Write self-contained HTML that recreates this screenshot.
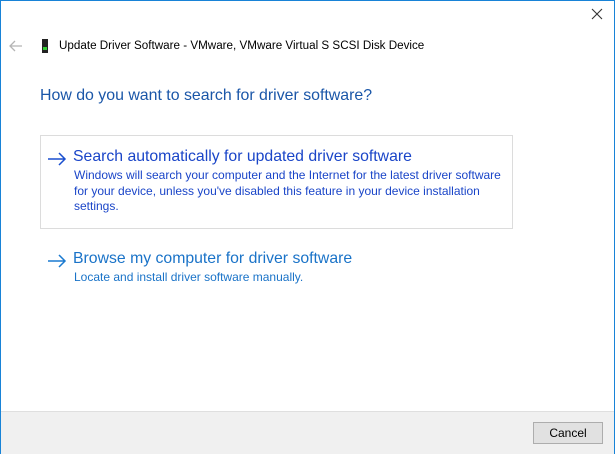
<!DOCTYPE html>
<html><head><style>
body{margin:0;width:615px;height:454px;overflow:hidden;font-family:"Liberation Sans",sans-serif;}
.win{position:absolute;left:0;top:0;width:613px;height:452px;border:1px solid #1883d7;background:#fff;}
.t{position:absolute;white-space:nowrap;}
</style></head><body>
<div class="win">
<svg class="t" style="left:589px;top:6px" width="14" height="14"><path d="M2 2L12 12M12 2L2 12" stroke="#333" stroke-width="1.1"/></svg>
<svg class="t" style="left:8px;top:39px" width="14" height="12"><path d="M1 6H13M6 1L1 6L6 11" stroke="#b5b5b5" stroke-width="1.3" fill="none"/></svg>
<div class="t" style="left:41px;top:38px;width:6px;height:14px;background:#222;"></div>
<div class="t" style="left:42px;top:46px;width:4px;height:3px;background:#3c3;"></div>
<div class="t" style="left:58px;top:38px;font-size:11.65px;color:#000;">Update Driver Software - VMware, VMware Virtual S SCSI Disk Device</div>
<div class="t" style="left:39px;top:86px;font-size:15.9px;color:#1a56a8;">How do you want to search for driver software?</div>
<div class="t" style="left:39px;top:134px;width:471px;height:92px;border:1px solid #dcdcdc;"></div>
<svg class="t" style="left:46px;top:151px" width="20" height="14"><path d="M1 7H18M12 1L18 7L12 13" stroke="#1a4fcf" stroke-width="1.5" fill="none"/></svg>
<div class="t" style="left:72px;top:147px;font-size:15.8px;color:#1a45c8;">Search automatically for updated driver software</div>
<div class="t" style="left:73px;top:167px;font-size:12px;line-height:15.5px;color:#1a45c8;">Windows will search your computer and the Internet for the latest driver software<br>for your device, unless you've disabled this feature in your device installation<br>settings.</div>
<svg class="t" style="left:46px;top:253px" width="20" height="14"><path d="M1 7H18M12 1L18 7L12 13" stroke="#1a7ad0" stroke-width="1.5" fill="none"/></svg>
<div class="t" style="left:72px;top:249px;font-size:15.8px;color:#1a73c8;">Browse my computer for driver software</div>
<div class="t" style="left:73px;top:269px;font-size:12px;color:#1a73c8;">Locate and install driver software manually.</div>
<div class="t" style="left:0;top:410px;width:613px;height:42px;background:#f0f0f0;border-top:1px solid #dfdfdf;"></div>
<div class="t" style="left:532px;top:421px;width:68px;height:20px;border:1px solid #adadad;background:#e1e1e1;font-size:12px;text-align:center;line-height:20px;color:#000;">Cancel</div>
</div>
</body></html>
